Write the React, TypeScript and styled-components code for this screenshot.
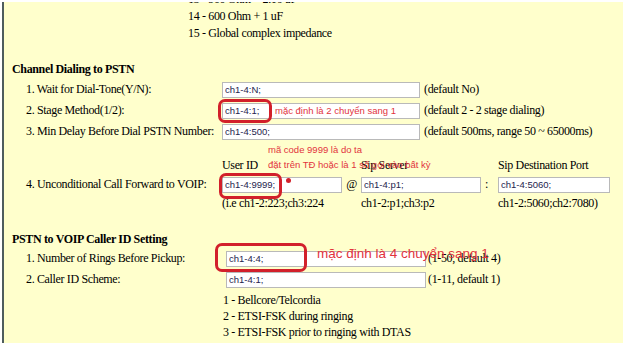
import React from "react";
import styled, { createGlobalStyle } from "styled-components";

const GlobalStyle = createGlobalStyle`
  html, body {
    margin: 0;
    padding: 0;
    background: #ffffff;
  }
  body {
    width: 623px;
    height: 348px;
    overflow: hidden;
  }
`;

///Styled Comps

const Page = styled.div`
  box-sizing: border-box;
  height: 348px;
  padding: 2px 0 0 2px;
`;

const Panel = styled.div`
  height: 341px;
  border-left: 2px solid #4f5d5d;
  background: #ffffcc;
  overflow: hidden;
  font-family: "Liberation Serif", "Times New Roman", serif;
  font-size: 12px;
  letter-spacing: -0.35px;
  line-height: 17px;
  color: #000;
`;

const OptionList = styled.div<{ $top: number; $left: number; $line: number }>`
  margin-top: ${(p) => p.$top}px;
  padding-left: ${(p) => p.$left}px;
  line-height: ${(p) => p.$line}px;
  white-space: nowrap;
`;

const SectionTitle = styled.div<{ $top: number }>`
  margin-top: ${(p) => p.$top}px;
  padding-left: 8px;
  font-weight: bold;
  white-space: nowrap;
`;

const Row = styled.div<{ $top?: number }>`
  display: flex;
  align-items: center;
  height: 21px;
  margin-top: ${(p) => p.$top || 0}px;
  padding-left: 22px;
`;

const Label = styled.div<{ $width: number }>`
  width: ${(p) => p.$width}px;
  flex-shrink: 0;
  white-space: nowrap;
`;

const Anchor = styled.div`
  position: relative;
  display: flex;
`;

const TextField = styled.input<{ $width: number }>`
  box-sizing: border-box;
  width: ${(p) => p.$width}px;
  height: 16px;
  margin: 0;
  padding: 0 2px;
  border: 1px solid #b9b9b9;
  background: #ffffff;
  font-family: "Liberation Sans", Arial, sans-serif;
  font-size: 9.5px;
  letter-spacing: 0;
  color: #25254e;
  outline: none;
`;

const Hint = styled.span<{ $gap: number }>`
  margin-left: ${(p) => p.$gap}px;
  white-space: nowrap;
`;

const ForwardGrid = styled.div`
  display: grid;
  grid-template-columns: 196px 120px 19px 120px 17px 112px;
  grid-template-rows: 17px 21px 17px;
  align-items: center;
  margin-top: 15px;
  padding-left: 22px;
`;

const Cell = styled.div<{ $col: number; $row: number; $align?: string }>`
  grid-column: ${(p) => p.$col};
  grid-row: ${(p) => p.$row};
  justify-self: ${(p) => p.$align || "start"};
  white-space: nowrap;
`;

const Separator = styled(Cell)`
  padding-left: 4px;
`;

// red marks drawn over the form
const Ring = styled.div<{ $left: number; $top: number; $w: number; $h: number }>`
  position: absolute;
  left: ${(p) => p.$left}px;
  top: ${(p) => p.$top}px;
  width: ${(p) => p.$w}px;
  height: ${(p) => p.$h}px;
  box-sizing: border-box;
  border: 3px solid #d2202b;
  border-radius: 7px;
  pointer-events: none;
`;

const Note = styled.div<{ $left: number; $top: number; $size: number; $line: number }>`
  position: absolute;
  left: ${(p) => p.$left}px;
  top: ${(p) => p.$top}px;
  font-family: "Liberation Sans", Arial, sans-serif;
  font-size: ${(p) => p.$size}px;
  letter-spacing: 0;
  line-height: ${(p) => p.$line}px;
  color: #e2333d;
  white-space: nowrap;
  pointer-events: none;
`;

const Dot = styled.div<{ $left: number; $top: number }>`
  position: absolute;
  left: ${(p) => p.$left}px;
  top: ${(p) => p.$top}px;
  width: 5px;
  height: 5px;
  border-radius: 50%;
  background: #d2202b;
`;

///////

const App: React.FC = () => {
  return (
    <Page>
      <GlobalStyle />
      <Panel>
        <OptionList $top={-11} $left={184} $line={17}>
          <div>13 - 900 Ohm + 2.16 uF</div>
          <div>14 - 600 Ohm + 1 uF</div>
          <div>15 - Global complex impedance</div>
        </OptionList>

        <SectionTitle $top={19}>Channel Dialing to PSTN</SectionTitle>
        <Row $top={1}>
          <Label $width={196}>1. Wait for Dial-Tone(Y/N):</Label>
          <TextField $width={198} defaultValue="ch1-4:N;" readOnly />
          <Hint $gap={4}>(default No)</Hint>
        </Row>
        <Row>
          <Label $width={196}>2. Stage Method(1/2):</Label>
          <Anchor>
            <TextField $width={198} defaultValue="ch1-4:1;" readOnly />
            <Ring $left={-4} $top={-4} $w={54} $h={24} />
            <Note $left={53} $top={2} $size={9.5} $line={12}>
              mặc định là 2 chuyển sang 1
            </Note>
          </Anchor>
          <Hint $gap={4}>(default 2 - 2 stage dialing)</Hint>
        </Row>
        <Row>
          <Label $width={196}>3. Min Delay Before Dial PSTN Number:</Label>
          <TextField $width={198} defaultValue="ch1-4:500;" readOnly />
          <Hint $gap={4}>(default 500ms, range 50 ~ 65000ms)</Hint>
        </Row>

        <ForwardGrid>
          <Cell $col={2} $row={1}>User ID</Cell>
          <Cell $col={4} $row={1}>Sip Server</Cell>
          <Cell $col={6} $row={1}>Sip Destination Port</Cell>

          <Cell $col={1} $row={2}>4. Unconditional Call Forward to VOIP:</Cell>
          <Cell $col={2} $row={2}>
            <Anchor>
              <TextField $width={120} defaultValue="ch1-4:9999;" readOnly />
              <Ring $left={-3} $top={-4} $w={63} $h={26} />
              <Dot $left={64} $top={1} />
              <Note $left={46} $top={-35} $size={9.5} $line={15}>
                <div>mã code 9999 là do ta</div>
                <div>đặt trên TĐ hoặc là 1 số gọi vào bất kỳ</div>
              </Note>
            </Anchor>
          </Cell>
          <Cell $col={3} $row={2} $align="center">@</Cell>
          <Cell $col={4} $row={2}>
            <TextField $width={120} defaultValue="ch1-4:p1;" readOnly />
          </Cell>
          <Separator $col={5} $row={2}>:</Separator>
          <Cell $col={6} $row={2}>
            <TextField $width={112} defaultValue="ch1-4:5060;" readOnly />
          </Cell>

          <Cell $col={2} $row={3}>(i.e ch1-2:223;ch3:224</Cell>
          <Cell $col={4} $row={3}>ch1-2:p1;ch3:p2</Cell>
          <Cell $col={6} $row={3}>ch1-2:5060;ch2:7080)</Cell>
        </ForwardGrid>

        <SectionTitle $top={19}>PSTN to VOIP Caller ID Setting</SectionTitle>
        <Row>
          <Label $width={200}>1. Number of Rings Before Pickup:</Label>
          <Anchor>
            <TextField $width={200} defaultValue="ch1-4:4;" readOnly />
            <Ring $left={-11} $top={-8} $w={92} $h={29} />
            <Note $left={91} $top={-6} $size={13.5} $line={18}>
              mặc định là 4 chuyển sang 1
            </Note>
          </Anchor>
          <Hint $gap={2}>(1-50, default 4)</Hint>
        </Row>
        <Row>
          <Label $width={200}>2. Caller ID Scheme:</Label>
          <TextField $width={200} defaultValue="ch1-4:1;" readOnly />
          <Hint $gap={2}>(1-11, default 1)</Hint>
        </Row>
        <OptionList $top={2} $left={219} $line={16}>
          <div>1 - Bellcore/Telcordia</div>
          <div>2 - ETSI-FSK during ringing</div>
          <div>3 - ETSI-FSK prior to ringing with DTAS</div>
        </OptionList>
      </Panel>
    </Page>
  );
};

export default App;
